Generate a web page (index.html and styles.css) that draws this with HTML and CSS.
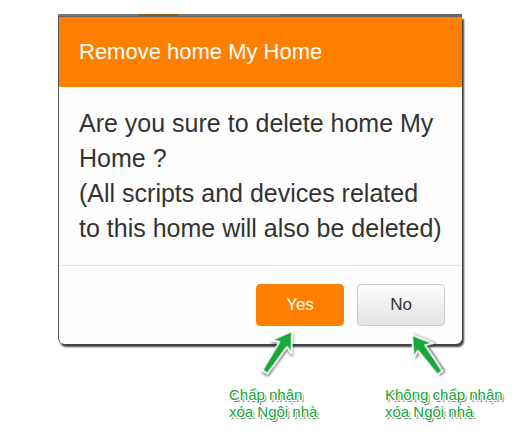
FILE: index.html
```html
<!DOCTYPE html>
<html>
<head>
<meta charset="utf-8">
<link rel="stylesheet" href="styles.css">
</head>
<body>
<div class="page">
  <div class="backdrop-strip"></div>
  <div class="dialog">
    <div class="dialog-header">Remove home My Home</div>
    <div class="dialog-body">Are you sure to delete home My Home ?<br>(All scripts and devices related to this home will also be deleted)</div>
    <div class="dialog-footer">
      <button class="btn btn-yes">Yes</button>
      <button class="btn btn-no">No</button>
    </div>
  </div>
  <svg class="arrows" width="530" height="440" viewBox="0 0 530 440">
    <defs>
      <filter id="sh" x="-50%" y="-50%" width="200%" height="200%">
        <feDropShadow dx="1.5" dy="1.5" stdDeviation="1" flood-color="#000" flood-opacity="0.6"/>
      </filter>
    </defs>
    <g transform="translate(292 331) rotate(33.4)">
      <polygon filter="url(#sh)" points="0,0 12,19 4.5,16 3,49 -3,49 -4.5,16 -12,19" fill="#13a83a" stroke="#fff" stroke-width="1.5" stroke-linejoin="round"/>
    </g>
    <g transform="translate(412 335) rotate(-36.4)">
      <polygon filter="url(#sh)" points="0,0 12,19 4.5,16 3,47 -3,47 -4.5,16 -12,19" fill="#13a83a" stroke="#fff" stroke-width="1.5" stroke-linejoin="round"/>
    </g>
  </svg>
  <div class="note note-yes">Chấp nhận<br>xóa Ngôi nhà</div>
  <div class="note note-no">Không chấp nhận<br>xóa Ngôi nhà</div>
</div>
</body>
</html>
```
FILE: styles.css
```css
html, body {
  margin: 0;
  padding: 0;
  background: #fff;
}
.page {
  position: relative;
  width: 530px;
  height: 440px;
  overflow: hidden;
  font-family: "Liberation Sans", Arial, sans-serif;
}
.backdrop-strip {
  position: absolute;
  left: 58px;
  top: 14px;
  width: 404px;
  height: 3px;
  background: linear-gradient(90deg, #777 0 20%, #8a5a20 20% 30%, #777 30% 55%, #666 55% 100%);
}
.dialog {
  position: relative;
  margin: 16px 0 0 58px;
  width: 403px;
  border-top: 1px solid #666;
  border-left: 1px solid #555;
  background: #fdfdfd;
  border-radius: 0 0 6px 6px;
  box-shadow: 2px 3px 2px rgba(0, 0, 0, 0.75);
}
.dialog-header {
  height: 70px;
  background: #ff8000;
  color: #fff;
  font-size: 22px;
  line-height: 70px;
  padding-left: 20px;
}
.dialog-body {
  padding: 19px 20px 19px 20px;
  font-size: 25px;
  line-height: 35px;
  color: #333;
  border-bottom: 1px solid #e5e5e5;
}
.dialog-footer {
  display: flex;
  justify-content: flex-end;
  gap: 13px;
  padding: 18px 17px 18px 0;
}
.btn {
  width: 88px;
  height: 42px;
  border-radius: 4px;
  font-family: "Liberation Sans", Arial, sans-serif;
  font-size: 17px;
  cursor: pointer;
}
.btn-yes {
  background: #ff8000;
  color: #fff;
  border: 1px solid #ff8000;
}
.btn-no {
  background: linear-gradient(#fdfdfd, #e2e2e2);
  color: #333;
  border: 1px solid #ccc;
}
.arrows {
  position: absolute;
  left: 0;
  top: 0;
}
.note {
  position: absolute;
  font-size: 15px;
  line-height: 17px;
  color: #13a83a;
  text-shadow:
    -1px -1px 0 #fff, 1px -1px 0 #fff, -1px 1px 0 #fff, 1px 1px 0 #fff,
    0 -1px 0 #fff, 0 1px 0 #fff, -1px 0 0 #fff, 1px 0 0 #fff,
    2px 2px 1px rgba(0, 0, 0, 0.6);
}
.note-yes {
  left: 229px;
  top: 386px;
}
.note-no {
  left: 385px;
  top: 386px;
}
```
